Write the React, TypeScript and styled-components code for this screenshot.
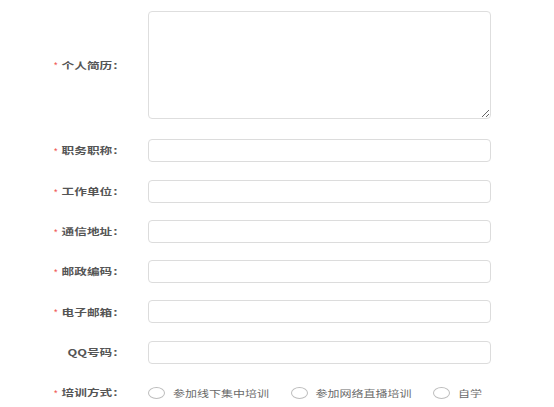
import React from "react";
import styled, { createGlobalStyle } from "styled-components";

const Global = createGlobalStyle`
  html, body { margin: 0; padding: 0; background: #fff; }
  body { font-family: "Noto Sans CJK SC", "Noto Sans", sans-serif; }
  * { box-sizing: border-box; }
`;

const Form = styled.div`
  display: flex;
  flex-direction: column;
  gap: 17.3px;
  padding-top: 11px;
  width: 554px;
`;

const Row = styled.div<{ $tall?: boolean }>`
  display: flex;
  align-items: center;
  gap: 23px;
  margin-bottom: ${(p) => (p.$tall ? "3px" : "0")};
`;

const Label = styled.div`
  width: 125px;
  flex: none;
  display: flex;
  justify-content: flex-end;
  align-items: center;
  gap: 4px;
`;

const Star = styled.span`
  color: #f04a4a;
  font-family: "Liberation Sans", sans-serif;
  font-size: 9px;
  line-height: 1;
  transform: translateY(1px);
`;

const LabelText = styled.span`
  display: inline-block;
  font-size: 12.7px;
  font-weight: 700;
  color: #555;
  line-height: 1;
  white-space: nowrap;
  transform: scaleY(0.72);
`;

const TextArea = styled.textarea`
  width: 343px;
  height: 108px;
  border: 1px solid #dedede;
  border-radius: 4px;
  outline: none;
  resize: both;
  margin: 0;
  padding: 4px 8px;
  background: #fff;
`;

const Input = styled.input`
  width: 343px;
  height: 23px;
  border: 1px solid #dcdcdc;
  border-radius: 4px;
  outline: none;
  margin: 0;
  padding: 0 8px;
  background: #fff;
`;

const RadioGroup = styled.div`
  display: flex;
  align-items: center;
  gap: 21.5px;
  height: 23px;
`;

const Option = styled.label`
  display: flex;
  align-items: center;
  gap: 8px;
`;

const Circle = styled.span`
  width: 17px;
  height: 12px;
  border: 1px solid #bdbdbd;
  border-radius: 50%;
  background: #fff;
  flex: none;
`;

const OptionText = styled.span`
  display: inline-block;
  font-size: 12px;
  font-weight: 400;
  color: #6a6a6a;
  line-height: 1;
  white-space: nowrap;
  transform: scaleY(0.74);
`;

const fields: { label: string; required: boolean }[] = [
  { label: "职务职称：", required: true },
  { label: "工作单位：", required: true },
  { label: "通信地址：", required: true },
  { label: "邮政编码：", required: true },
  { label: "电子邮箱：", required: true },
  { label: "QQ号码：", required: false },
];

const options = ["参加线下集中培训", "参加网络直播培训", "自学"];

export default function App() {
  return (
    <>
      <Global />
      <Form>
        <Row $tall>
          <Label>
            <Star>*</Star>
            <LabelText>个人简历：</LabelText>
          </Label>
          <TextArea />
        </Row>
        {fields.map((f) => (
          <Row key={f.label}>
            <Label>
              {f.required && <Star>*</Star>}
              <LabelText>{f.label}</LabelText>
            </Label>
            <Input />
          </Row>
        ))}
        <Row>
          <Label>
            <Star>*</Star>
            <LabelText>培训方式：</LabelText>
          </Label>
          <RadioGroup>
            {options.map((o) => (
              <Option key={o}>
                <Circle />
                <OptionText>{o}</OptionText>
              </Option>
            ))}
          </RadioGroup>
        </Row>
      </Form>
    </>
  );
}
